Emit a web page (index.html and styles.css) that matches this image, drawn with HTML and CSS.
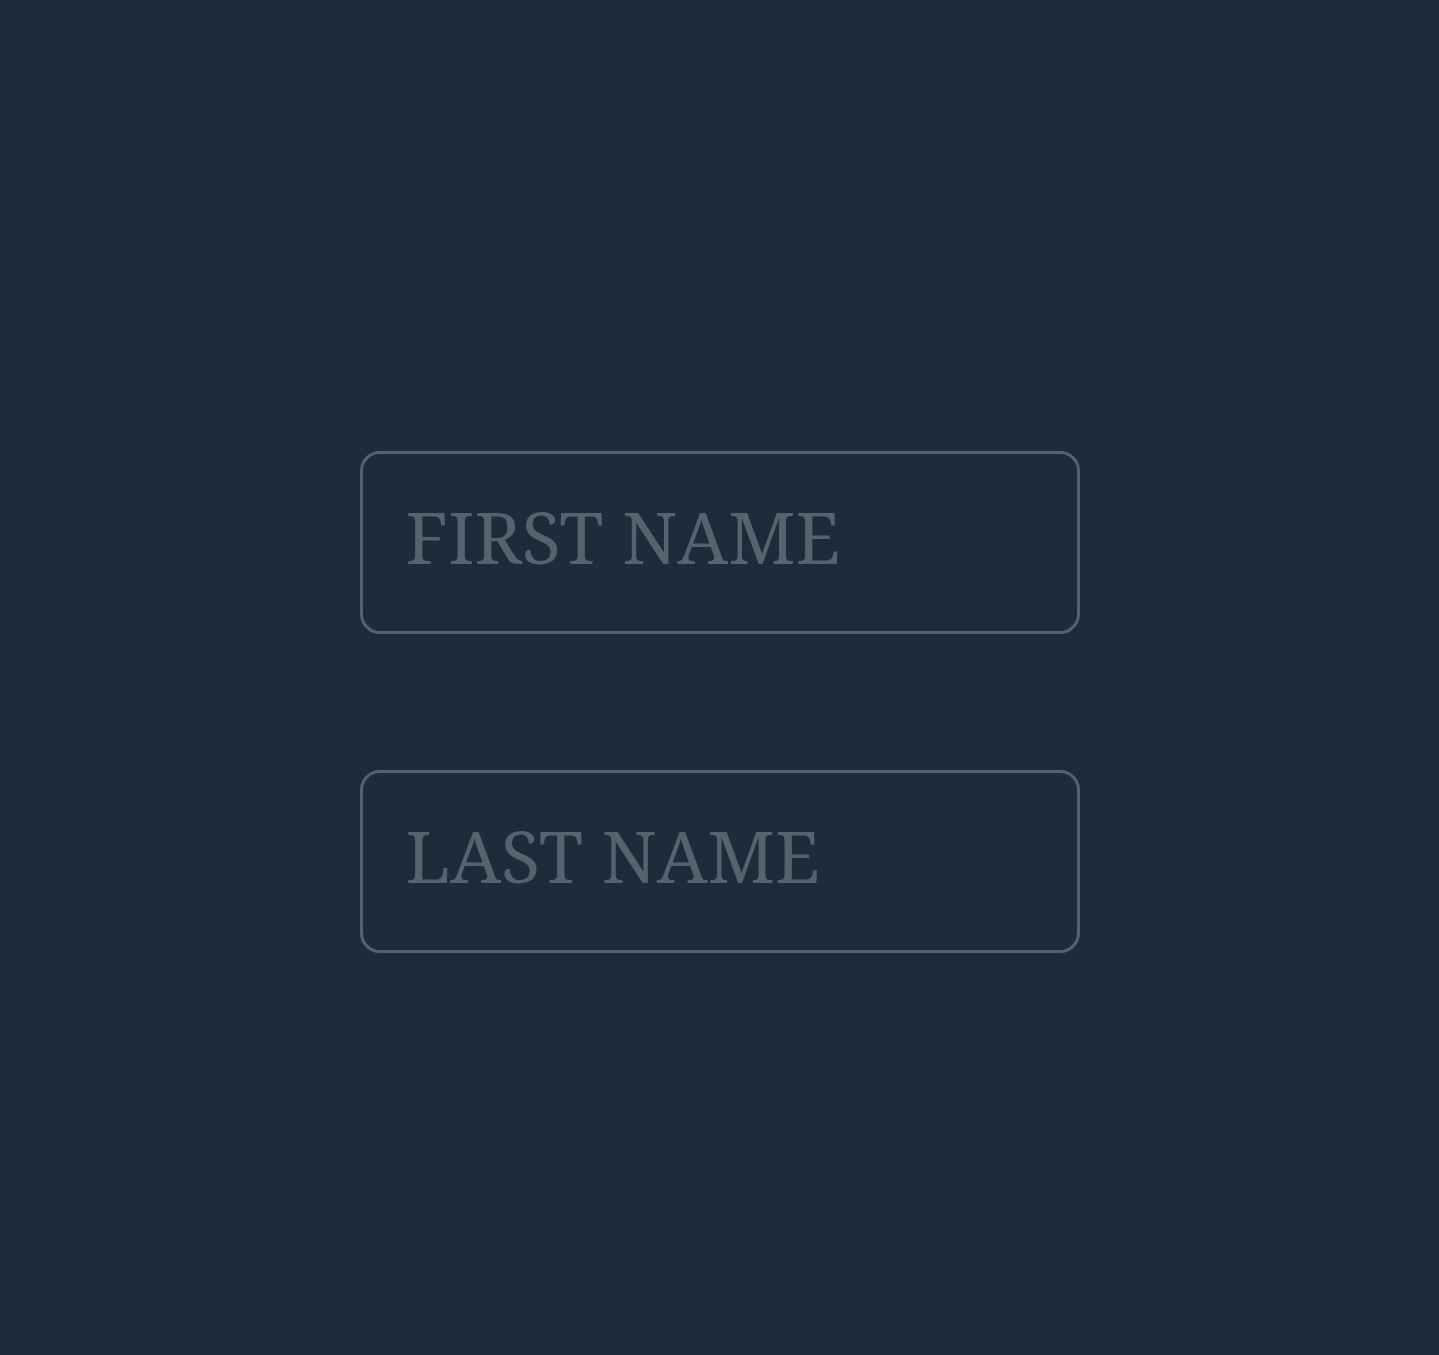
FILE: index.html
```html
<!DOCTYPE html>
<html lang="en">
<head>
<meta charset="utf-8">
<title>Name form</title>
<link rel="stylesheet" href="styles.css">
</head>
<body>
<form class="form">
  <input class="field" type="text" placeholder="FIRST NAME">
  <input class="field" type="text" placeholder="LAST NAME">
</form>
</body>
</html>
```

FILE: styles.css
```css
html, body {
  margin: 0;
  padding: 0;
  background: #1f2a3a;
}
body {
  min-height: 1355px;
  box-sizing: border-box;
  padding-top: 451px;
}
.form {
  display: flex;
  flex-direction: column;
  align-items: center;
  gap: 136px;
}
.field {
  box-sizing: border-box;
  width: 720px;
  height: 183px;
  margin: 0;
  padding: 0 40px 14px 43px;
  border: 3px solid #56616d;
  border-radius: 20px;
  background: transparent;
  color: #8a96a3;
  font-family: "Noto Serif", "Liberation Serif", serif;
  font-size: 72px;
  outline: none;
}
.field::placeholder {
  color: #56626e;
  opacity: 1;
}
```
